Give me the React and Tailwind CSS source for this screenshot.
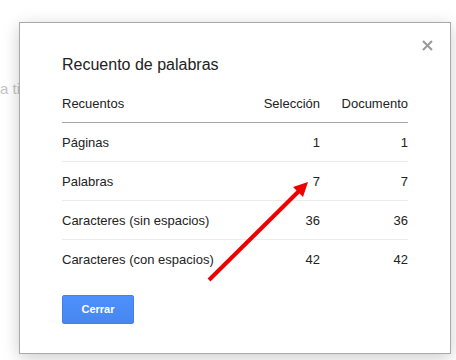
const rows = [
  { label: "Páginas", sel: "1", doc: "1" },
  { label: "Palabras", sel: "7", doc: "7" },
  { label: "Caracteres (sin espacios)", sel: "36", doc: "36" },
  { label: "Caracteres (con espacios)", sel: "42", doc: "42" },
];

export default function App() {
  return (
    <div
      className="relative h-[360px] w-[456px] overflow-hidden bg-white text-[#222]"
      style={{ fontFamily: '"Liberation Sans", Arial, sans-serif' }}
    >
      {/* texto del documento detrás del diálogo */}
      <div className="absolute left-0 top-[79px] text-[15px] leading-[20px] text-[#c4c4c4]">
        a ti
      </div>

      {/* diálogo */}
      <div className="relative z-10 ml-[19px] mt-[22px] h-[332px] w-[432px] border border-[#a9a9a9] bg-white/85 pl-[42px] pr-[42px] pt-[32px] shadow-[0_4px_16px_rgba(0,0,0,0.2)]">
        <button className="absolute right-[17px] top-[16px] flex h-[12px] w-[12px] items-center justify-center">
          <svg width="11" height="11" viewBox="0 0 11 11">
            <path
              d="M1 1 L10 10 M10 1 L1 10"
              stroke="#9a9a9a"
              strokeWidth="2"
              fill="none"
            />
          </svg>
        </button>

        <h2 className="text-[16px] font-normal leading-[20px]">
          Recuento de palabras
        </h2>

        <div className="mt-[9px] w-[346px] text-[13px] leading-[15px]">
          <div className="flex h-[39px] items-center border-b border-[#a5a5a5]">
            <div className="flex-1">Recuentos</div>
            <div className="w-[80px] text-right">Selección</div>
            <div className="w-[88px] text-right">Documento</div>
          </div>
          {rows.map((r, i) => (
            <div
              key={r.label}
              className={`flex h-[39px] items-center ${
                i < rows.length - 1 ? "border-b border-[#ebebeb]" : ""
              }`}
            >
              <div className="flex-1">{r.label}</div>
              <div className="w-[80px] text-right">{r.sel}</div>
              <div className="w-[88px] text-right">{r.doc}</div>
            </div>
          ))}
        </div>

        <button className="mt-[16px] h-[29px] w-[72px] rounded-[2px] border border-[#3f82ee] bg-gradient-to-b from-[#4d90fe] to-[#4787ed] text-[11px] font-bold text-white">
          Cerrar
        </button>
      </div>

      {/* flecha roja */}
      <svg
        className="pointer-events-none absolute left-0 top-0 z-20"
        width="456"
        height="360"
      >
        <line
          x1="209"
          y1="280"
          x2="299"
          y2="191"
          stroke="#ee0000"
          strokeWidth="4"
        />
        <polygon points="308,182 303,197 293,187" fill="#ee0000" />
      </svg>
    </div>
  );
}
